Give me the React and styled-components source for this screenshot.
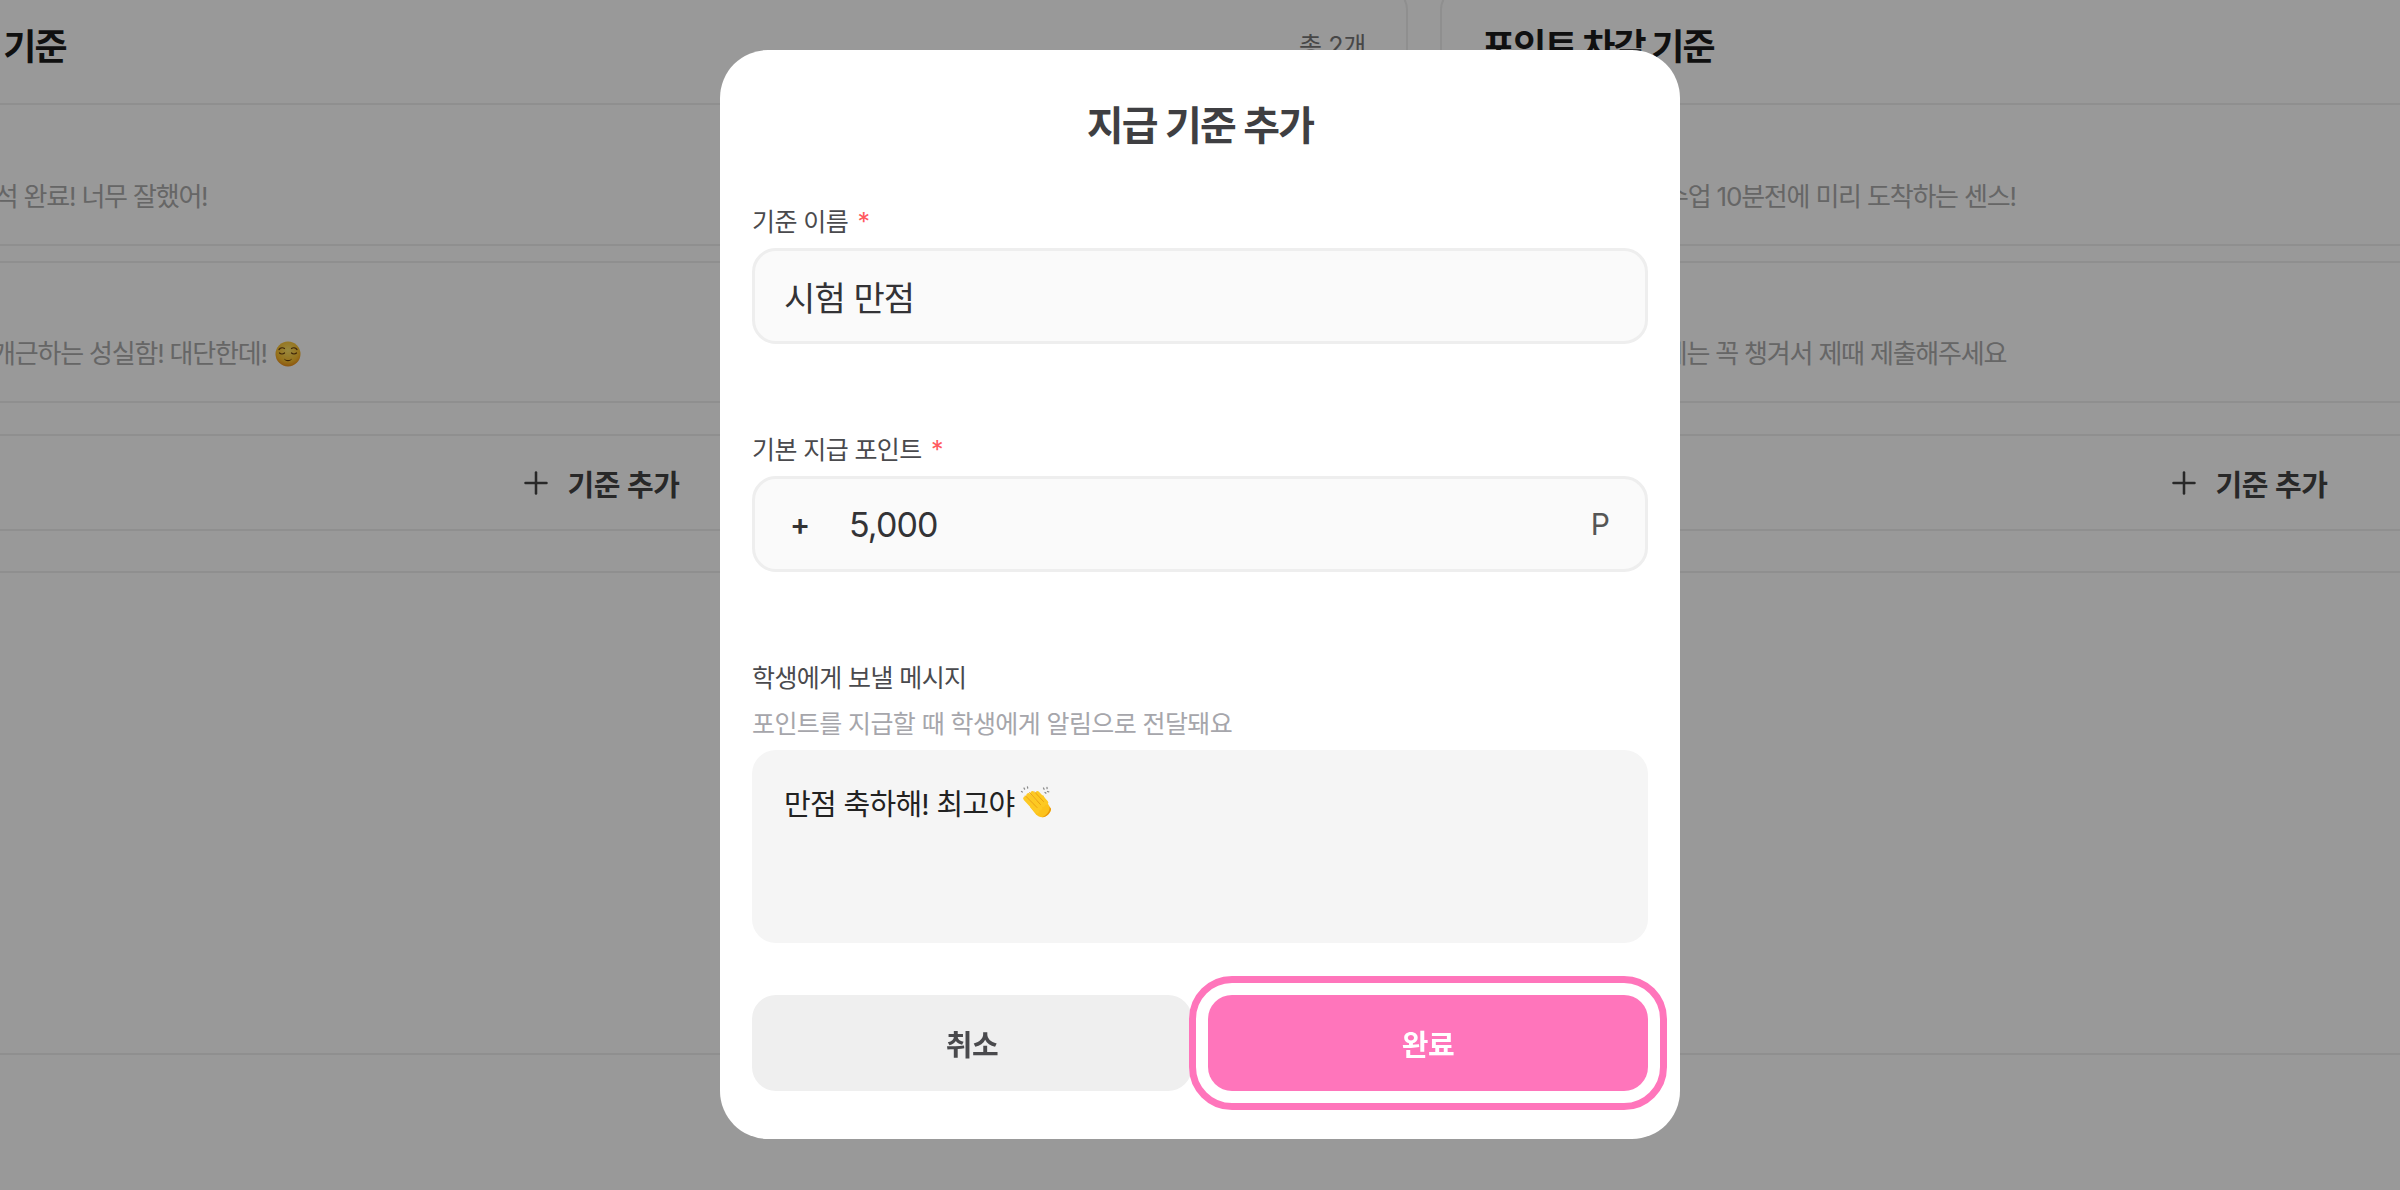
import React from 'react';
import styled, { createGlobalStyle } from 'styled-components';
import { Plus } from 'lucide-react';

const FONT = `Inter, "Noto Sans CJK KR", "Noto Sans", sans-serif`;

const GlobalStyle = createGlobalStyle`
    html, body {
        margin: 0;
        height: 100%;
        overflow: hidden;
        background: #fff;
        font-family: ${FONT};
    }
    * {
        box-sizing: border-box;
    }
`;

function ClapEmoji() {
    return (
        <ClapIcon viewBox='0 0 32 32' aria-hidden='true'>
            <g stroke='#8a8a8a' strokeWidth='1.300' strokeLinecap='round'>
                <path d='M1.500 5.500l.9.500M4 2l.6 1.100M7.500 1l.2 1.200' />
                <path d='M23.500 2l.6 1.200M27.500 5.500l1.300.4M27 1.500l.1 1.100M25 6.500l.9.6' />
            </g>
            <path d='M10 21L23 9l8 14c0 3-3 7-7 8-3 .7-6-.5-8-2.500z' fill='#fcc21b' />
            <path d='M24 31c3.500-1 6.500-4.500 7-8l-1.500-2.500c.5 4-1.500 8-7.500 10.800z' fill='#e8950c' />
            <g stroke='#fdc923' strokeWidth='4.600' strokeLinecap='round'>
                <path d='M5.500 12.500L17 25' />
                <path d='M8.500 9.500L20 22' />
                <path d='M12.500 7.500L23 18.500' />
                <path d='M17.500 7.500L26 16.500' />
            </g>
            <g stroke='#e4960f' strokeWidth='0.800' strokeLinecap='round' fill='none'>
                <path d='M5.500 9.800L17 21.500' />
                <path d='M9.500 6.500L20.500 18.500' />
                <path d='M14.500 5.800L23.500 15.500' />
            </g>
        </ClapIcon>
    );
}

function RelievedEmoji() {
    return (
        <FaceIcon viewBox='0 0 26 26' aria-hidden='true'>
            <defs>
                <radialGradient id='faceFill' cx='50%' cy='35%' r='65%'>
                    <stop offset='0%' stopColor='#fde36a' />
                    <stop offset='70%' stopColor='#fbbf2e' />
                    <stop offset='100%' stopColor='#ea8e1a' />
                </radialGradient>
            </defs>
            <circle cx='13' cy='13' r='12.500' fill='url(#faceFill)' />
            <g stroke='#6b4210' strokeWidth='1.200' strokeLinecap='round' fill='none'>
                <path d='M4 8.500c1.500-1.800 4-2 5.500-1' />
                <path d='M22 8.500c-1.500-1.800-4-2-5.500-1' />
                <path d='M4.500 12c1.300 1.300 3.700 1.300 5 0' />
                <path d='M16.500 12c1.300 1.300 3.700 1.300 5 0' />
            </g>
            <path d='M9 17.500c2 2 6 2 8 0-1 3.500-7 3.500-8 0z' fill='#5f3a0c' />
        </FaceIcon>
    );
}

function RuleRow({ inset, lineTop, children }) {
    return (
        <Row $lineTop={lineTop}>
            <Message $inset={inset}>{children}</Message>
        </Row>
    );
}

function RulePanel({ title, count, rows }) {
    return (
        <Panel>
            <PanelHeader>
                <PanelTitle>{title}</PanelTitle>
                <PanelCount>{count}</PanelCount>
            </PanelHeader>
            {rows.map((row, index) => (
                <RuleRow key={row.text} inset={row.inset} lineTop={index > 0}>
                    {row.text}
                    {row.emoji}
                </RuleRow>
            ))}
            <AddButton type='button'>
                <Plus size={36} strokeWidth={1.7} />
                <span>기준 추가</span>
            </AddButton>
            <EmptySection />
        </Panel>
    );
}

export default function App() {
    return (
        <>
            <GlobalStyle />
            <Board>
                <RulePanel
                    title='포인트 지급 기준'
                    count='총 2개'
                    rows={[
                        { text: '출석 완료! 너무 잘했어!', inset: 138 },
                        { text: '개근하는 성실함! 대단한데!', inset: 158, emoji: <RelievedEmoji /> },
                    ]}
                />
                <RulePanel
                    title='포인트 차감 기준'
                    count='총 2개'
                    rows={[
                        { text: '수업 10분전에 미리 도착하는 센스!', inset: 183 },
                        { text: '과제는 꼭 챙겨서 제때 제출해주세요', inset: 159 },
                    ]}
                />
            </Board>
            <Overlay>
                <Modal>
                    <ModalTitle>지급 기준 추가</ModalTitle>
                    <Field>
                        <Label>
                            기준 이름 <Required>*</Required>
                        </Label>
                        <InputBox>
                            <TextInput readOnly value='시험 만점' />
                        </InputBox>
                    </Field>
                    <Field $top={87}>
                        <Label>
                            기본 지급 포인트 <Required>*</Required>
                        </Label>
                        <InputBox>
                            <Sign>+</Sign>
                            <TextInput readOnly value='5,000' />
                            <Unit>P</Unit>
                        </InputBox>
                    </Field>
                    <Field $top={87}>
                        <Label>학생에게 보낼 메시지</Label>
                        <Hint>포인트를 지급할 때 학생에게 알림으로 전달돼요</Hint>
                        <MessageBox>
                            <TextArea readOnly value='만점 축하해! 최고야' rows={1} wrap='off' />
                            <ClapEmoji />
                        </MessageBox>
                    </Field>
                    <Actions>
                        <CancelButton type='button'>취소</CancelButton>
                        <DoneButton type='button'>완료</DoneButton>
                    </Actions>
                </Modal>
            </Overlay>
        </>
    );
}

const Board = styled.div`
    display: flex;
    gap: 32px;
    width: 3400px;
    margin: -14px 0 0 -208px;
`;

const Panel = styled.section`
    width: 1616px;
    height: 1069px;
    flex: none;
    border: 2px solid #eeeeee;
    border-radius: 24px;
    background: #fff;
    color: #222;
`;

const PanelHeader = styled.header`
    display: flex;
    justify-content: space-between;
    align-items: center;
    height: 117px;
    padding: 0 40px 3px;
    border-bottom: 2px solid #eeeeee;
`;

const PanelTitle = styled.h2`
    margin: 0;
    font-size: 36px;
    font-weight: 700;
    letter-spacing: -1.9px;
    color: #1c1c1c;
`;

const PanelCount = styled.span`
    font-size: 25px;
    letter-spacing: -0.3px;
    color: #777;
`;

const Row = styled.div`
    display: flex;
    align-items: flex-end;
    height: ${({ $lineTop }) => ($lineTop ? '142px' : '141px')};
    margin-top: ${({ $lineTop }) => ($lineTop ? '15px' : '0')};
    padding: 0 0 29px 40px;
    border-bottom: 2px solid #eeeeee;
    border-top: ${({ $lineTop }) => ($lineTop ? '2px solid #eeeeee' : '0')};
`;

const Message = styled.p`
    display: flex;
    align-items: center;
    gap: 8px;
    margin: 0;
    padding-left: ${({ $inset }) => $inset}px;
    font-size: 26px;
    line-height: 36px;
    letter-spacing: -1.2px;
    color: #aaa;
`;

const ClapIcon = styled.svg`
    width: 32px;
    height: 32px;
    flex: none;
    margin-top: 0;
`;

const FaceIcon = styled.svg`
    width: 26px;
    height: 26px;
    flex: none;
`;

const AddButton = styled.button`
    display: flex;
    justify-content: center;
    align-items: center;
    gap: 13px;
    width: 100%;
    height: 97px;
    margin-top: 31px;
    padding: 0 2px 0 0;
    border: 0;
    border-top: 2px solid #eeeeee;
    border-bottom: 2px solid #eeeeee;
    background: transparent;
    font-family: ${FONT};
    font-size: 29px;
    font-weight: 600;
    letter-spacing: -0.4px;
    color: #444;
`;

const EmptySection = styled.div`
    margin-top: 40px;
    border-top: 2px solid #eeeeee;
`;

const Overlay = styled.div`
    position: fixed;
    inset: 0;
    display: flex;
    justify-content: center;
    align-items: flex-start;
    padding-top: 50px;
    background: rgba(0, 0, 0, 0.4);
`;

const Modal = styled.div`
    display: flex;
    flex-direction: column;
    width: 960px;
    height: 1089px;
    padding: 48px 32px 47px;
    border-radius: 48px;
    background: #fff;
`;

const ModalTitle = styled.h1`
    margin: 0 0 49px;
    font-size: 40px;
    line-height: 56px;
    font-weight: 600;
    letter-spacing: -1.8px;
    text-align: center;
    color: #3f3f42;
`;

const Field = styled.div`
    display: flex;
    flex-direction: column;
    margin-top: ${({ $top }) => $top || 0}px;
`;

const Label = styled.label`
    margin: 1px 0 8px;
    font-size: 25px;
    line-height: 36px;
    letter-spacing: -0.6px;
    color: #4a4a4d;
`;

const Required = styled.span`
    margin-left: 3px;
    color: #ff5a5f;
`;

const Hint = styled.p`
    margin: 2px 0 8px;
    font-size: 25px;
    line-height: 36px;
    letter-spacing: -0.6px;
    color: #a6a6ab;
`;

const InputBox = styled.div`
    display: flex;
    align-items: center;
    height: 96px;
    padding: 0 35px 0 29px;
    border: 3px solid #eeeeee;
    border-radius: 24px;
    background: #fafafa;
`;

const TextInput = styled.input`
    flex: 1;
    min-width: 0;
    padding: 0;
    border: 0;
    outline: 0;
    background: transparent;
    font-family: ${FONT};
    font-size: 34px;
    letter-spacing: -0.9px;
    color: #333336;
`;

const Sign = styled.span`
    width: 65px;
    padding-left: 6px;
    font-size: 30px;
    font-weight: 600;
    color: #333;
`;

const Unit = styled.span`
    font-size: 30px;
    color: #555;
`;

const MessageBox = styled.div`
    display: flex;
    align-items: flex-start;
    height: 193px;
    padding: 36px 32px;
    border-radius: 24px;
    background: #f5f5f5;
`;

const TextArea = styled.textarea`
    width: 236px;
    height: 38px;
    padding: 0;
    border: 0;
    outline: 0;
    overflow: hidden;
    resize: none;
    background: transparent;
    font-family: ${FONT};
    font-size: 29px;
    line-height: 38px;
    letter-spacing: -0.7px;
    color: #222;
`;

const Actions = styled.div`
    display: flex;
    gap: 16px;
    margin-top: 52px;
`;

const BaseButton = styled.button`
    flex: 1;
    height: 96px;
    border: 0;
    border-radius: 24px;
    font-family: ${FONT};
    font-size: 29px;
    font-weight: 700;
    letter-spacing: -0.4px;
`;

const CancelButton = styled(BaseButton)`
    background: #efefef;
    color: #4a4a4d;
`;

const DoneButton = styled(BaseButton)`
    background: #ff75bb;
    color: #fff;
    outline: 7px solid #ff75bb;
    outline-offset: 12px;
`;
